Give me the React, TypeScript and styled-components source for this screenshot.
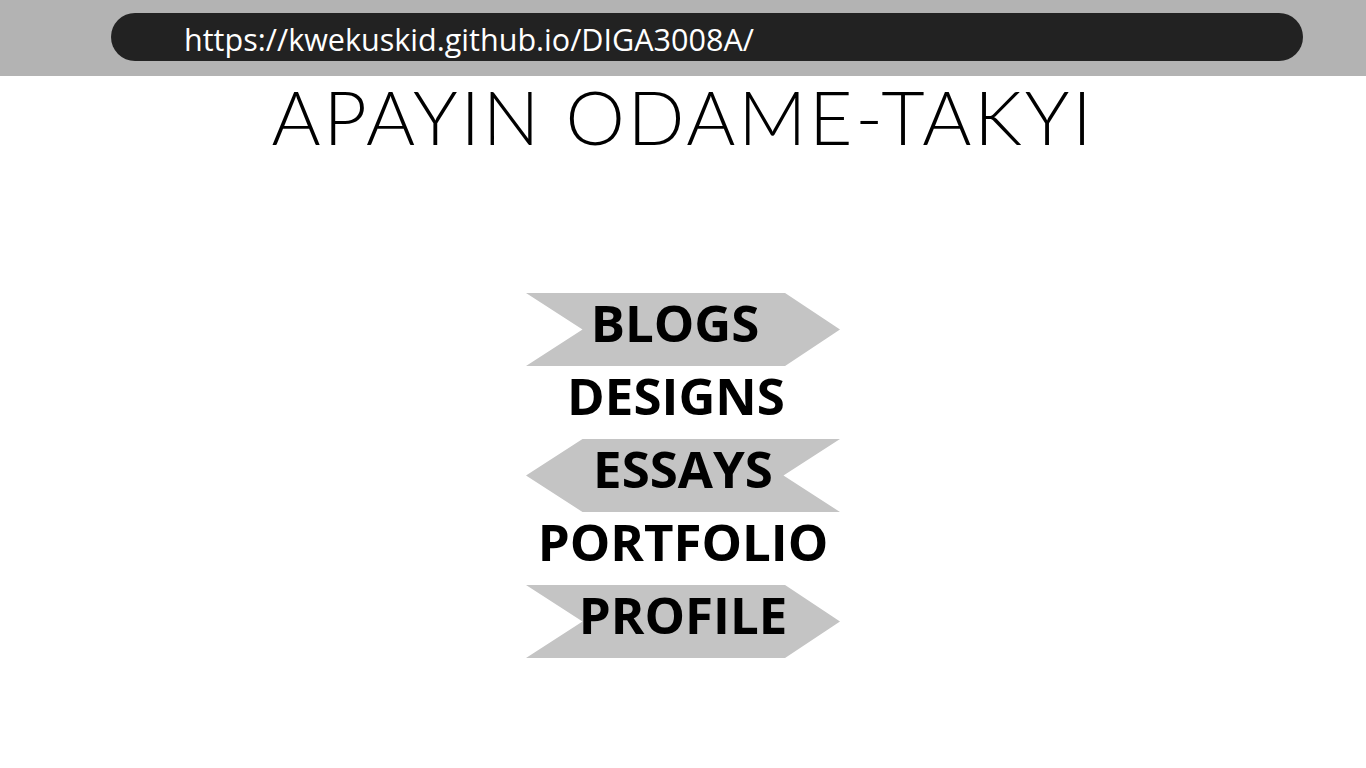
import React from "react";
import styled, { createGlobalStyle, css } from "styled-components";

type Direction = "right" | "left" | "none";

type NavItem = {
  label: string;
  direction: Direction;
  shift?: number;
};

const navItems: NavItem[] = [
  { label: "BLOGS", direction: "right", shift: -8 },
  { label: "DESIGNS", direction: "none", shift: -7 },
  { label: "ESSAYS", direction: "left" },
  { label: "PORTFOLIO", direction: "none" },
  { label: "PROFILE", direction: "right" },
];

const GlobalStyle = createGlobalStyle`
  html, body {
    margin: 0;
    padding: 0;
    background: #ffffff;
  }

  #root {
    width: 1366px;
    height: 768px;
    overflow: hidden;
  }
`;

export default function App() {
  return (
    <>
      <GlobalStyle />
      <Page>
        <AddressBar>
          <UrlPill>
            <UrlText>https://kwekuskid.github.io/DIGA3008A/</UrlText>
          </UrlPill>
        </AddressBar>

        <Title>APAYIN ODAME-TAKYI</Title>

        <Nav>
          {navItems.map((item) => (
            <NavRow key={item.label} $direction={item.direction}>
              <NavLabel $shift={item.shift ?? 0}>{item.label}</NavLabel>
            </NavRow>
          ))}
        </Nav>
      </Page>
    </>
  );
}

const Page = styled.div`
  width: 1366px;
  height: 768px;
  display: flex;
  flex-direction: column;
  align-items: center;
  background: #ffffff;
`;

const AddressBar = styled.header`
  width: 100%;
  height: 76px;
  box-sizing: border-box;
  padding: 13px 63px 15px 111px;
  background: #b3b3b3;
`;

const UrlPill = styled.div`
  height: 48px;
  border-radius: 24px;
  background: #222222;
  display: flex;
  align-items: center;
  padding-left: 73px;
`;

const UrlText = styled.span`
  font-family: "Open Sans", "Noto Sans", sans-serif;
  font-size: 31px;
  line-height: 48px;
  font-weight: 400;
  color: #ffffff;
  transform: translateY(2px) scaleX(0.985);
  transform-origin: left center;
  white-space: nowrap;
`;

const Title = styled.h1`
  margin: -1px 0 0;
  font-family: "Lato", "Liberation Sans", sans-serif;
  font-size: 75px;
  line-height: 82px;
  font-weight: 300;
  letter-spacing: 2.8px;
  color: #000000;
  white-space: nowrap;
`;

const Nav = styled.nav`
  margin-top: 136px;
  width: 314px;
  display: flex;
  flex-direction: column;
`;

const arrowRight = css`
  background: #c4c4c4;
  clip-path: polygon(0 0, 82.5% 0, 100% 50%, 82.5% 100%, 0 100%, 18% 50%);
`;

const arrowLeft = css`
  background: #c4c4c4;
  clip-path: polygon(18% 0, 100% 0, 82% 50%, 100% 100%, 18% 100%, 0 50%);
`;

const NavRow = styled.a<{ $direction: Direction }>`
  height: 73px;
  display: flex;
  align-items: center;
  justify-content: center;
  text-decoration: none;
  ${({ $direction }) =>
    $direction === "right" ? arrowRight : $direction === "left" ? arrowLeft : ""}
`;

const NavLabel = styled.span<{ $shift: number }>`
  font-family: "Open Sans", "Noto Sans", sans-serif;
  font-size: 51px;
  line-height: 73px;
  font-weight: 700;
  color: #000000;
  transform: translate(${({ $shift }) => $shift}px, -7px);
`;
